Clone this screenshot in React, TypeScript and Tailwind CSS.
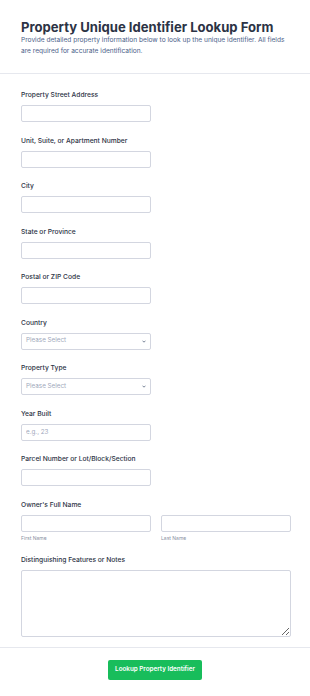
import React from "react"

const font = { fontFamily: "Inter, 'Noto Sans', sans-serif" }

function Field({ label, children }: { label: string; children: React.ReactNode }) {
  return (
    <div className="flex flex-col">
      <label className="text-[6.7px] leading-[10px] font-medium text-[#2c3345] mb-[5px]">{label}</label>
      {children}
    </div>
  )
}

const inputCls =
  "h-[17px] w-[130px] rounded-[2px] border border-[#d3d6e0] bg-white px-[4px] text-[6.3px] text-[#2c3345] outline-none placeholder:text-[#a0a8bb]"

function Select() {
  return (
    <div className="relative w-[130px]">
      <div className="h-[17px] w-full rounded-[2px] border border-[#d3d6e0] bg-white px-[4px] flex items-center text-[6.3px] text-[#a0a8bb]">
        Please Select
      </div>
      <svg className="absolute right-[5px] top-[7px]" width="4" height="3" viewBox="0 0 4 3">
        <path d="M0.5 0.7 L2 2.2 L3.5 0.7" fill="none" stroke="#57647e" strokeWidth="0.8" />
      </svg>
    </div>
  )
}

export default function App() {
  return (
    <main className="min-h-screen w-[310px] bg-white" style={font}>
      {/* Header */}
      <div className="px-[21px] pt-[20px] pb-[16px] border-b border-[#e6e8ee]">
        <h1 className="text-[13.1px] leading-[15px] font-bold text-[#2c3345] whitespace-nowrap">
          Property Unique Identifier Lookup Form
        </h1>
        <p className="text-[6.6px] leading-[11px] text-[#4a6088]">
          Provide detailed property information below to look up the unique identifier. All fields are required for
          accurate identification.
        </p>
      </div>

      {/* Fields */}
      <div className="px-[21px] pt-[16px] flex flex-col gap-[13.5px]">
        <Field label="Property Street Address">
          <input className={inputCls} />
        </Field>
        <Field label="Unit, Suite, or Apartment Number">
          <input className={inputCls} />
        </Field>
        <Field label="City">
          <input className={inputCls} />
        </Field>
        <Field label="State or Province">
          <input className={inputCls} />
        </Field>
        <Field label="Postal or ZIP Code">
          <input className={inputCls} />
        </Field>
        <Field label="Country">
          <Select />
        </Field>
        <Field label="Property Type">
          <Select />
        </Field>
        <Field label="Year Built">
          <input className={inputCls} placeholder="e.g., 23" />
        </Field>
        <Field label="Parcel Number or Lot/Block/Section">
          <input className={inputCls} />
        </Field>
        <Field label="Owner's Full Name">
          <div className="flex gap-[10px]">
            <div className="flex flex-col">
              <input className={inputCls} />
              <span className="mt-[3px] text-[5px] leading-[7px] text-[#8a91a3]">First Name</span>
            </div>
            <div className="flex flex-col">
              <input className={inputCls} />
              <span className="mt-[3px] text-[5px] leading-[7px] text-[#8a91a3]">Last Name</span>
            </div>
          </div>
        </Field>
        <Field label="Distinguishing Features or Notes">
          <textarea className="h-[67px] w-[270px] rounded-[2px] border border-[#d3d6e0] bg-white outline-none" />
        </Field>
      </div>

      {/* Submit */}
      <div className="mt-[10px] border-t border-[#e6e8ee] flex justify-center pt-[12px] pb-[16px]">
        <button className="h-[20px] px-[7px] rounded-[2px] bg-[#18bd5b] text-white text-[6.3px] font-semibold">
          Lookup Property Identifier
        </button>
      </div>
    </main>
  )
}
